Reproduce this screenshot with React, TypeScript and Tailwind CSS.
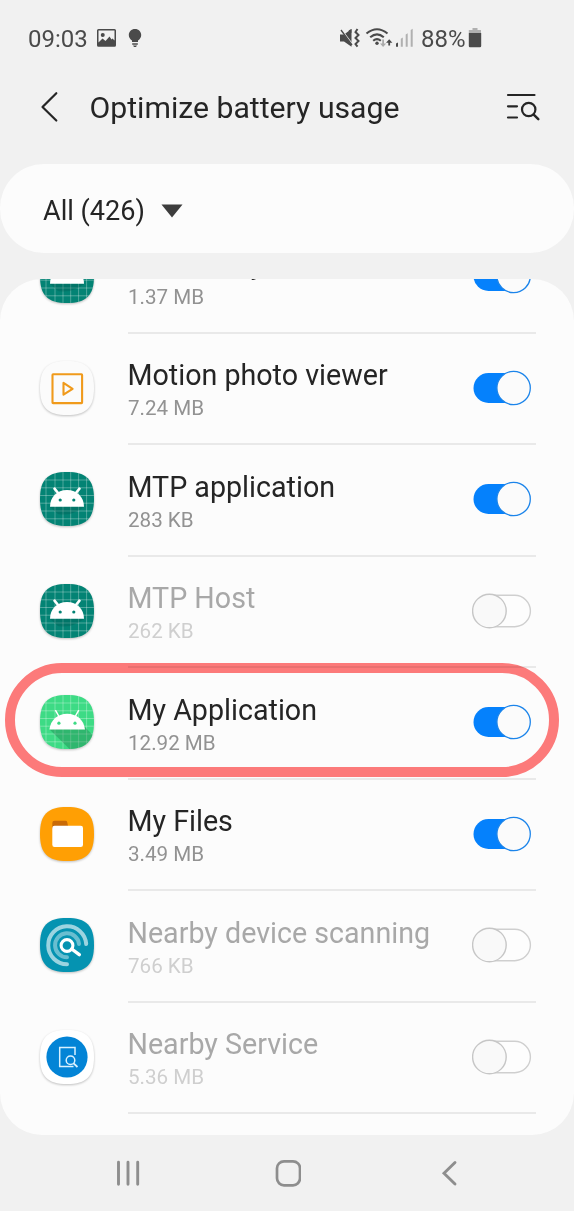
import type { ReactNode } from 'react';

const SQUIRCLE = 'M27 0C46.5 0 54 7.5 54 27S46.5 54 27 54 0 46.5 0 27 7.500 0 27 0Z';

function AppIcon({ id, fill, children }: { id: string; fill: string; children: ReactNode }) {
  return (
    <svg
      viewBox="0 0 54 54"
      className="h-[54px] w-[54px] shrink-0 overflow-visible drop-shadow-[0_1px_0.9px_rgba(0,0,0,0.24)]"
    >
      <clipPath id={id}>
        <path d={SQUIRCLE} />
      </clipPath>
      <path d={SQUIRCLE} fill={fill} />
      <g clipPath={`url(#${id})`}>{children}</g>
    </svg>
  );
}

function Grid() {
  return (
    <path
      d="M6 0V54M15 0V54M23 0V54M30.700 0V54M38.600 0V54M46.600 0V54M0 8H54M0 15.800H54M0 23.500H54M0 31.200H54M0 39H54M0 46.800H54"
      stroke="#fff"
      strokeOpacity=".38"
      strokeWidth=".8"
    />
  );
}

function SystemIcon({ id }: { id: string }) {
  return (
    <AppIcon id={id} fill="#038374">
      <Grid />
      <path d="M10 35H44L38 39Q28 44 18 42Z" fill="#00564c" opacity=".3" />
      <path d="M10 34.700C10 25 17 18 27 18S44 25 44 34.700Z" fill="#fff" />
      <path d="M14.500 16.700L18.500 21.500M39.500 16.700L35.500 21.500" stroke="#fff" strokeWidth="2.600" strokeLinecap="round" />
      <circle cx="20.200" cy="28" r="1.600" fill="#038374" />
      <circle cx="33.800" cy="28" r="1.600" fill="#038374" />
    </AppIcon>
  );
}

function MyAppIcon({ id }: { id: string }) {
  return (
    <AppIcon id={id} fill="#3ddb85">
      <Grid />
      <path d="M9.600 34.500L29.500 54H54V41.500L44 31Z" fill="#136b3f" opacity=".32" />
      <path d="M9.400 34.500C10.500 25 17.500 18.700 27.200 18.700S44 25 45 34.500Z" fill="#fff" />
      <path d="M15.700 15.700L19 21.500M38.500 15.700L35.200 21.500" stroke="#fff" strokeWidth="1.500" strokeLinecap="round" />
      <circle cx="18.900" cy="28.200" r="1.600" fill="#3ddb85" />
      <circle cx="35" cy="28.200" r="1.600" fill="#3ddb85" />
    </AppIcon>
  );
}

function MotionIcon({ id }: { id: string }) {
  return (
    <AppIcon id={id} fill="#fbfbfb">
      <rect x="12.500" y="13.300" width="29.600" height="28.800" rx=".6" fill="none" stroke="#f09a1b" strokeWidth="2.100" />
      <path d="M23.500 21.900V33.700L32.600 27.800Z" fill="none" stroke="#f09a1b" strokeWidth="2.100" strokeLinejoin="round" />
    </AppIcon>
  );
}

function FilesIcon({ id }: { id: string }) {
  return (
    <AppIcon id={id} fill="#ff9f04">
      <path d="M12.300 22V16Q12.300 13.700 14.600 13.700H25.500Q26.800 13.700 27.200 15L28 19V22Z" fill="#c96a06" />
      <rect x="12.300" y="18.700" width="30.700" height="21.300" rx="2.200" fill="#fff" />
    </AppIcon>
  );
}

function ScanIcon({ id }: { id: string }) {
  return (
    <AppIcon id={id} fill="#0593b1">
      <g fill="none" stroke="#fff" strokeLinecap="round">
        <path d="M27 46.300A19 19 0 1 1 46.200 26" strokeOpacity=".6" strokeWidth="4" />
        <path d="M27 39.300A12 12 0 1 1 39 26" strokeOpacity=".4" strokeWidth="4" />
        <circle cx="27" cy="27.500" r="5.900" strokeWidth="3.100" fill="#0593b1" />
        <path d="M31.700 31L39.300 36.700" strokeWidth="3.400" />
      </g>
    </AppIcon>
  );
}

function ServiceIcon({ id }: { id: string }) {
  return (
    <AppIcon id={id} fill="#ffffff">
      <circle cx="27" cy="27" r="20.600" fill="#0384d6" />
      <g fill="none" stroke="#d9f1ff" strokeWidth="1.500">
        <path d="M35 25V17.500H19.700V36.500H33.500" />
        <circle cx="30.500" cy="30.200" r="4.300" />
        <path d="M33.600 33.300L37.500 37" strokeWidth="1.800" />
      </g>
    </AppIcon>
  );
}

function Toggle({ on }: { on: boolean }) {
  return (
    <svg viewBox="0 0 60 36" className="h-[36px] w-[60px] shrink-0" role="switch" aria-checked={on}>
      {on ? (
        <>
          <rect x="1.500" y="3" width="56" height="30" rx="15" fill="#0581fc" />
          <circle cx="41.600" cy="18" r="16.700" fill="#fbfbfb" stroke="#1b84ea" strokeWidth="1.300" />
        </>
      ) : (
        <>
          <rect x="3" y="2.300" width="55.400" height="31.400" rx="15.700" fill="#fdfdfd" stroke="#cfcfcf" strokeWidth="1.400" />
          <circle cx="17.400" cy="18" r="16.800" fill="#f9f9f9" stroke="#c6c6c6" strokeWidth="1.400" />
        </>
      )}
    </svg>
  );
}

type Item = {
  name: string;
  size: string;
  on: boolean;
  highlighted?: boolean;
  Icon: (props: { id: string }) => ReactNode;
};

const items: Item[] = [
  { name: 'Mobile key', size: '1.37 MB', on: true, Icon: SystemIcon },
  { name: 'Motion photo viewer', size: '7.24 MB', on: true, Icon: MotionIcon },
  { name: 'MTP application', size: '283 KB', on: true, Icon: SystemIcon },
  { name: 'MTP Host', size: '262 KB', on: false, Icon: SystemIcon },
  { name: 'My Application', size: '12.92 MB', on: true, highlighted: true, Icon: MyAppIcon },
  { name: 'My Files', size: '3.49 MB', on: true, Icon: FilesIcon },
  { name: 'Nearby device scanning', size: '766 KB', on: false, Icon: ScanIcon },
  { name: 'Nearby Service', size: '5.36 MB', on: false, Icon: ServiceIcon },
];

function Row({ item, index }: { item: Item; index: number }) {
  const { Icon } = item;
  return (
    <li className="relative flex h-[111.5px] pl-10">
      <div className="pt-[27px]">
        <Icon id={`app-icon-${index}`} />
      </div>
      <div className="mr-[38px] ml-[34px] flex flex-1 items-start border-b-2 border-[#e9e9e9]">
        <div className="flex-1 pt-[23.900px]">
          <div className={`-ml-[0.5px] text-[28.650px] leading-[36px] whitespace-nowrap ${item.on ? 'text-[#252525]' : 'text-[#a8a8a8]'}`}>
            {item.name}
          </div>
          <div className={`pt-[1px] text-[20.600px] leading-[28px] ${item.on ? 'text-[#929292]' : 'text-[#cfcfcf]'}`}>{item.size}</div>
        </div>
        <div className="mr-[4px] pt-[36.100px]">
          <Toggle on={item.on} />
        </div>
      </div>
      {item.highlighted && (
        <div className="absolute -top-[5.400px] left-[5px] h-[114px] w-[554px] rounded-full border-[10px] border-[#ff7b7b] mix-blend-multiply" />
      )}
    </li>
  );
}

function StatusBar() {
  return (
    <div className="flex h-[76px] items-start pt-[24px] pl-[28px] text-[24px] leading-[30px] text-[#4a4a4a]">
      <span className="w-[69px] whitespace-nowrap">09:03</span>
      <svg viewBox="0 0 46 28" className="h-[28px] w-[46px]" fill="#4a4a4a">
        <path
          fillRule="evenodd"
          d="M1.500 5H17.500Q19 5 19 6.500V21.200Q19 22.700 17.500 22.700H1.500Q0 22.700 0 21.200V6.500Q0 5 1.500 5ZM1.500 6.500V18.500L5.500 14.500L8.500 17L12.500 12.500L14.500 15.500L15.500 14.500L17.500 16.500V6.500ZM5.800 9A2 2 0 1 1 5.700 13A2 2 0 1 1 5.800 9Z"
        />
        <path d="M38 5C41.700 5 44.200 7.700 44.200 11C44.200 13.300 43 15.200 41 16.500V18H35V16.500C33 15.200 31.800 13.300 31.800 11C31.800 7.700 34.300 5 38 5ZM35.200 19.300H40.800V20.700H35.200ZM36 21.500H40L39 23H37Z" />
      </svg>
      <svg viewBox="0 0 76 28" className="ml-[196px] h-[28px] w-[76px]" fill="#4a4a4a">
        <path d="M1 10.500H5L12.500 5V22.700L5 17.500H1Z" />
        <path d="M1.500 4.500L14.500 22" stroke="#f2f2f2" strokeWidth="1.600" />
        <path d="M2 6L13 21" stroke="#4a4a4a" strokeWidth="1.300" />
        <path d="M12.500 9L9.500 6.500L12.500 5Z" />
        <path d="M18.500 5L16.500 8L19.500 11L16.500 14L19.500 17L16.500 20L18.500 22.700" fill="none" stroke="#4a4a4a" strokeWidth="2" />
        <g fill="none" stroke="#4a4a4a" strokeWidth="2.100">
          <path d="M27.500 9.500Q38 1 48.500 9.500" />
          <path d="M31.200 13.200Q38 7.500 44.800 13.200" />
          <path d="M34.200 16.700Q38 13.500 41.800 16.700" />
        </g>
        <circle cx="38" cy="19.300" r="1.700" />
        <path d="M43.200 15.500H45V19.500H47.200L44.100 23L41 19.500H43.200Z" fill="#ababab" />
        <path d="M49.300 21.500V18.700H47L50.200 15.200L53.400 18.700H51.100V21.500Z" />
        <path d="M57 19.500L59 18.500V22.700H57Z" />
        <path d="M61.800 14.800L63.800 13.500V22.700H61.800ZM66.700 10.500L68.700 9.200V22.700H66.700ZM71.700 6L73.700 4.700V22.700H71.700Z" fill="#b0b0b0" />
      </svg>
      <span className="ml-[6px] w-[47px] whitespace-nowrap">88%</span>
      <svg viewBox="0 0 14 28" className="h-[28px] w-[14px]">
        <path d="M4.500 4H9.500V6H13V9H.8V6H4.500Z" fill="#b0b0b0" />
        <path d="M.8 9H13.200V22Q13.200 23.300 11.900 23.300H2Q.8 23.300 .8 22Z" fill="#4a4a4a" />
      </svg>
    </div>
  );
}

export default function App() {
  return (
    <div className="flex h-[1211px] w-[574px] flex-col overflow-hidden bg-[#f1f1f1] font-['Roboto',sans-serif]">
      <StatusBar />
      <header className="flex h-[88px] items-start pl-[40px]">
        <svg viewBox="0 0 20 32" className="mt-[15px] h-[32px] w-[20px]" fill="none" stroke="#252525" strokeWidth="2.200" strokeLinecap="round" strokeLinejoin="round">
          <path d="M16.300 2.200L2.500 16L16.300 29.500" />
        </svg>
        <h1 className="mt-[13px] ml-[29.500px] w-[416.500px] text-[30.200px] leading-[38px] whitespace-nowrap text-[#252525]">Optimize battery usage</h1>
        <svg viewBox="0 0 36 30" className="mt-[16px] h-[30px] w-[36px]" fill="none" stroke="#252525" strokeWidth="2.200" strokeLinecap="round">
          <path d="M2 3H28.500M2 14.300H11M2 25.500H11" />
          <circle cx="22.700" cy="17.500" r="6.700" />
          <path d="M27.700 22.700L32.300 27.200" strokeWidth="2.500" />
        </svg>
      </header>
      <section className="flex h-[89px] shrink-0 items-center rounded-[44px] bg-[#fcfcfc] pl-[43px]">
        <span className="mt-[4px] w-[118px] text-[27.100px] leading-[36px] whitespace-nowrap text-[#252525]">All (426)</span>
        <svg viewBox="0 0 22 14" className="mt-[4px] h-[14px] w-[22px]">
          <path d="M.5 .5H21.500L11 13.500Z" fill="#3d3d3d" />
        </svg>
      </section>
      <main className="mt-[26px] h-[855.500px] shrink-0 overflow-hidden rounded-[42px] bg-[#fcfcfc]">
        <ul className="-mt-[57px]">
          {items.map((item, index) => (
            <Row key={item.name} item={item} index={index} />
          ))}
        </ul>
      </main>
      <nav className="flex flex-1 items-center justify-between px-[114px] pb-[0.5px]">
        <svg viewBox="0 0 28 28" className="h-[28px] w-[28px]" stroke="#8e8e8e" strokeWidth="2.900" strokeLinecap="round">
          <path d="M4.500 3.300V25.300M14 3.300V25.300M23.700 3.300V25.300" />
        </svg>
        <svg viewBox="0 0 28 28" className="h-[28px] w-[28px]" fill="none" stroke="#8e8e8e" strokeWidth="2.700">
          <rect x="4" y="2.300" width="23" height="24" rx="7" />
        </svg>
        <svg viewBox="0 0 28 28" className="h-[28px] w-[28px]" fill="none" stroke="#8e8e8e" strokeWidth="2.900" strokeLinecap="round">
          <path d="M23 3.500L12 14.300L23 25" />
        </svg>
      </nav>
    </div>
  );
}
